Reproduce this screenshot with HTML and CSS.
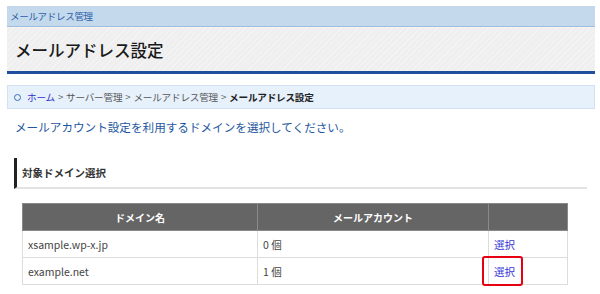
FILE: index.html
```html
<!DOCTYPE html>
<html lang="ja">
<head>
<meta charset="utf-8">
<link rel="stylesheet" href="styles.css">
</head>
<body>
<div class="page">
  <div class="topbar">メールアドレス管理</div>
  <div class="titlebar"><h1 class="title">メールアドレス設定</h1></div>
  <div class="crumbs">
    <span class="ring"></span>
    <a class="crumb-link" href="#">ホーム</a>
    <span class="sep">&gt;</span><span>サーバー管理</span>
    <span class="sep">&gt;</span><span>メールアドレス管理</span>
    <span class="sep">&gt;</span><span class="current">メールアドレス設定</span>
  </div>
  <p class="lead">メールアカウント設定を利用するドメインを選択してください。</p>
  <h2 class="section">対象ドメイン選択</h2>
  <table class="grid">
    <thead>
      <tr><th class="c1">ドメイン名</th><th class="c2">メールアカウント</th><th class="c3"></th></tr>
    </thead>
    <tbody>
      <tr><td>xsample.wp-x.jp</td><td>0 個</td><td><a class="pick" href="#">選択</a></td></tr>
      <tr><td>example.net</td><td>1 個</td><td class="marked"><a class="pick" href="#">選択</a><span class="redbox"></span></td></tr>
    </tbody>
  </table>
</div>
</body>
</html>
```

FILE: styles.css
```css
* { box-sizing: border-box; }
html, body { margin: 0; padding: 0; background: #fff; }
body {
  font-family: "Noto Sans CJK JP", "Noto Sans", sans-serif;
  color: #333;
  width: 600px;
  height: 294px;
  overflow: hidden;
}
.page {
  margin: 6px 5px 0 7px;
}
.topbar {
  height: 21px;
  background: #c4d9ec;
  border-bottom: 1px solid #9dbde0;
  color: #2a5ea8;
  font-size: 9.5px;
  line-height: 20px;
  padding-left: 3px;
  letter-spacing: -0.3px;
}
.titlebar {
  height: 47px;
  background-color: #efefef;
  background-image: repeating-linear-gradient(135deg, rgba(255,255,255,0.3) 0 1px, transparent 1px 4px);
  border-top: 1px solid #f8f4ee;
  border-bottom: 3px solid #1f4e9c;
  padding-left: 8px;
  display: flex;
  align-items: center;
}
.title {
  margin: 0;
  font-size: 16.5px;
  font-weight: 500;
  color: #1a1a1a;
  letter-spacing: 0;
}
.crumbs {
  margin-top: 11px;
  height: 24px;
  background: #e7f1fc;
  border: 1px solid #d2e2f3;
  display: flex;
  align-items: center;
  padding-left: 6px;
  font-size: 9.6px;
  color: #555;
  gap: 3px;
  letter-spacing: -0.2px;
}
.ring {
  width: 7px;
  height: 7px;
  border: 1.5px solid #3a6fb8;
  border-radius: 50%;
  margin-right: 3px;
}
.crumb-link { color: #2d2fd0; text-decoration: none; }
.sep { color: #666; }
.current { color: #222; font-weight: 700; }
.lead {
  margin: 9px 0 0 8px;
  font-size: 11.6px;
  color: #1e56a0;
  line-height: 18px;
}
.section {
  margin: 22px 8px 0 7px;
  height: 31px;
  border-left: 3px solid #222;
  border-bottom: 2px solid #e3e3e3;
  padding-left: 5px;
  font-size: 10.5px;
  font-weight: 700;
  color: #333;
  line-height: 29px;
}
.grid {
  margin: 14px 0 0 15px;
  width: 546px;
  border-collapse: collapse;
  font-size: 10.5px;
}
.grid th {
  background: #656565;
  color: #fff;
  font-weight: 700;
  height: 27px;
  border: 1px solid #8a8a8a;
  font-size: 10px;
  text-align: center;
}
.grid .c1 { width: 235px; }
.grid .c2 { width: 231px; }
.grid td {
  height: 27px;
  border: 1px solid #dcdcdc;
  padding: 0 0 0 5px;
  color: #444;
}
.pick { color: #3535d8; text-decoration: none; }
.marked { position: relative; }
.redbox {
  position: absolute;
  left: -7px;
  top: -2px;
  width: 41px;
  height: 30px;
  border: 2px solid #e60012;
  border-radius: 3px;
}
```
